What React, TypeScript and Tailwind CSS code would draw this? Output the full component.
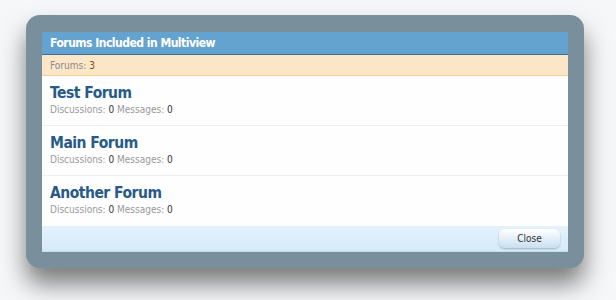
export default function App() {
  const forums = ["Test Forum", "Main Forum", "Another Forum"];

  return (
    <div className="w-[616px] h-[300px] bg-[#f6f7f8] pt-[15px] pl-[26px] font-['DejaVu_Sans_Condensed','DejaVu_Sans',sans-serif]">
      <div className="w-[558px] rounded-[14px] bg-[#7a8f9c] px-[16px] pt-[17px] pb-[16px] shadow-[0_16px_24px_rgba(0,0,0,0.5)]">
        <div className="bg-white">
          {/* header */}
          <div className="h-[23px] bg-[#64a3d0] border-b border-[#3e6f92] pl-[8px] flex items-center text-[12px] tracking-[-0.5px] font-bold text-white">
            Forums Included in Multiview
          </div>
          <div className="h-[21px] bg-[#fbe6c8] border-b border-[#efcf94] pl-[8px] flex items-center text-[10px] text-[#8a8a8a]">
            Forums: <span className="ml-[3px] text-[#7a5010]">3</span>
          </div>

          {forums.map((f, i) => (
            <div
              key={f}
              className={
                "h-[50px] pl-[8px] pt-[7px] bg-[#fefeff] " +
                (i < forums.length - 1 ? "border-b border-[#eceef0]" : "")
              }
            >
              <div className="text-[15.5px] leading-[20px] tracking-[-0.5px] font-bold text-[#275a88]">{f}</div>
              <div className="text-[10px] leading-[14px] text-[#999]">
                Discussions: <span className="text-[#333]">0</span> Messages: <span className="text-[#333]">0</span>
              </div>
            </div>
          ))}

          {/* footer */}
          <div className="h-[26px] bg-gradient-to-b from-[#e4f2fc] to-[#d5eaf8] border-b border-[#c5def0] flex items-center justify-end pr-[8px]">
            <button className="w-[61px] h-[19px] rounded-[6px] bg-gradient-to-b from-white to-[#c9dff0] shadow-[0_1px_2px_rgba(0,0,0,0.25)] text-[10px] text-[#333]">
              Close
            </button>
          </div>
        </div>
      </div>
    </div>
  );
}
